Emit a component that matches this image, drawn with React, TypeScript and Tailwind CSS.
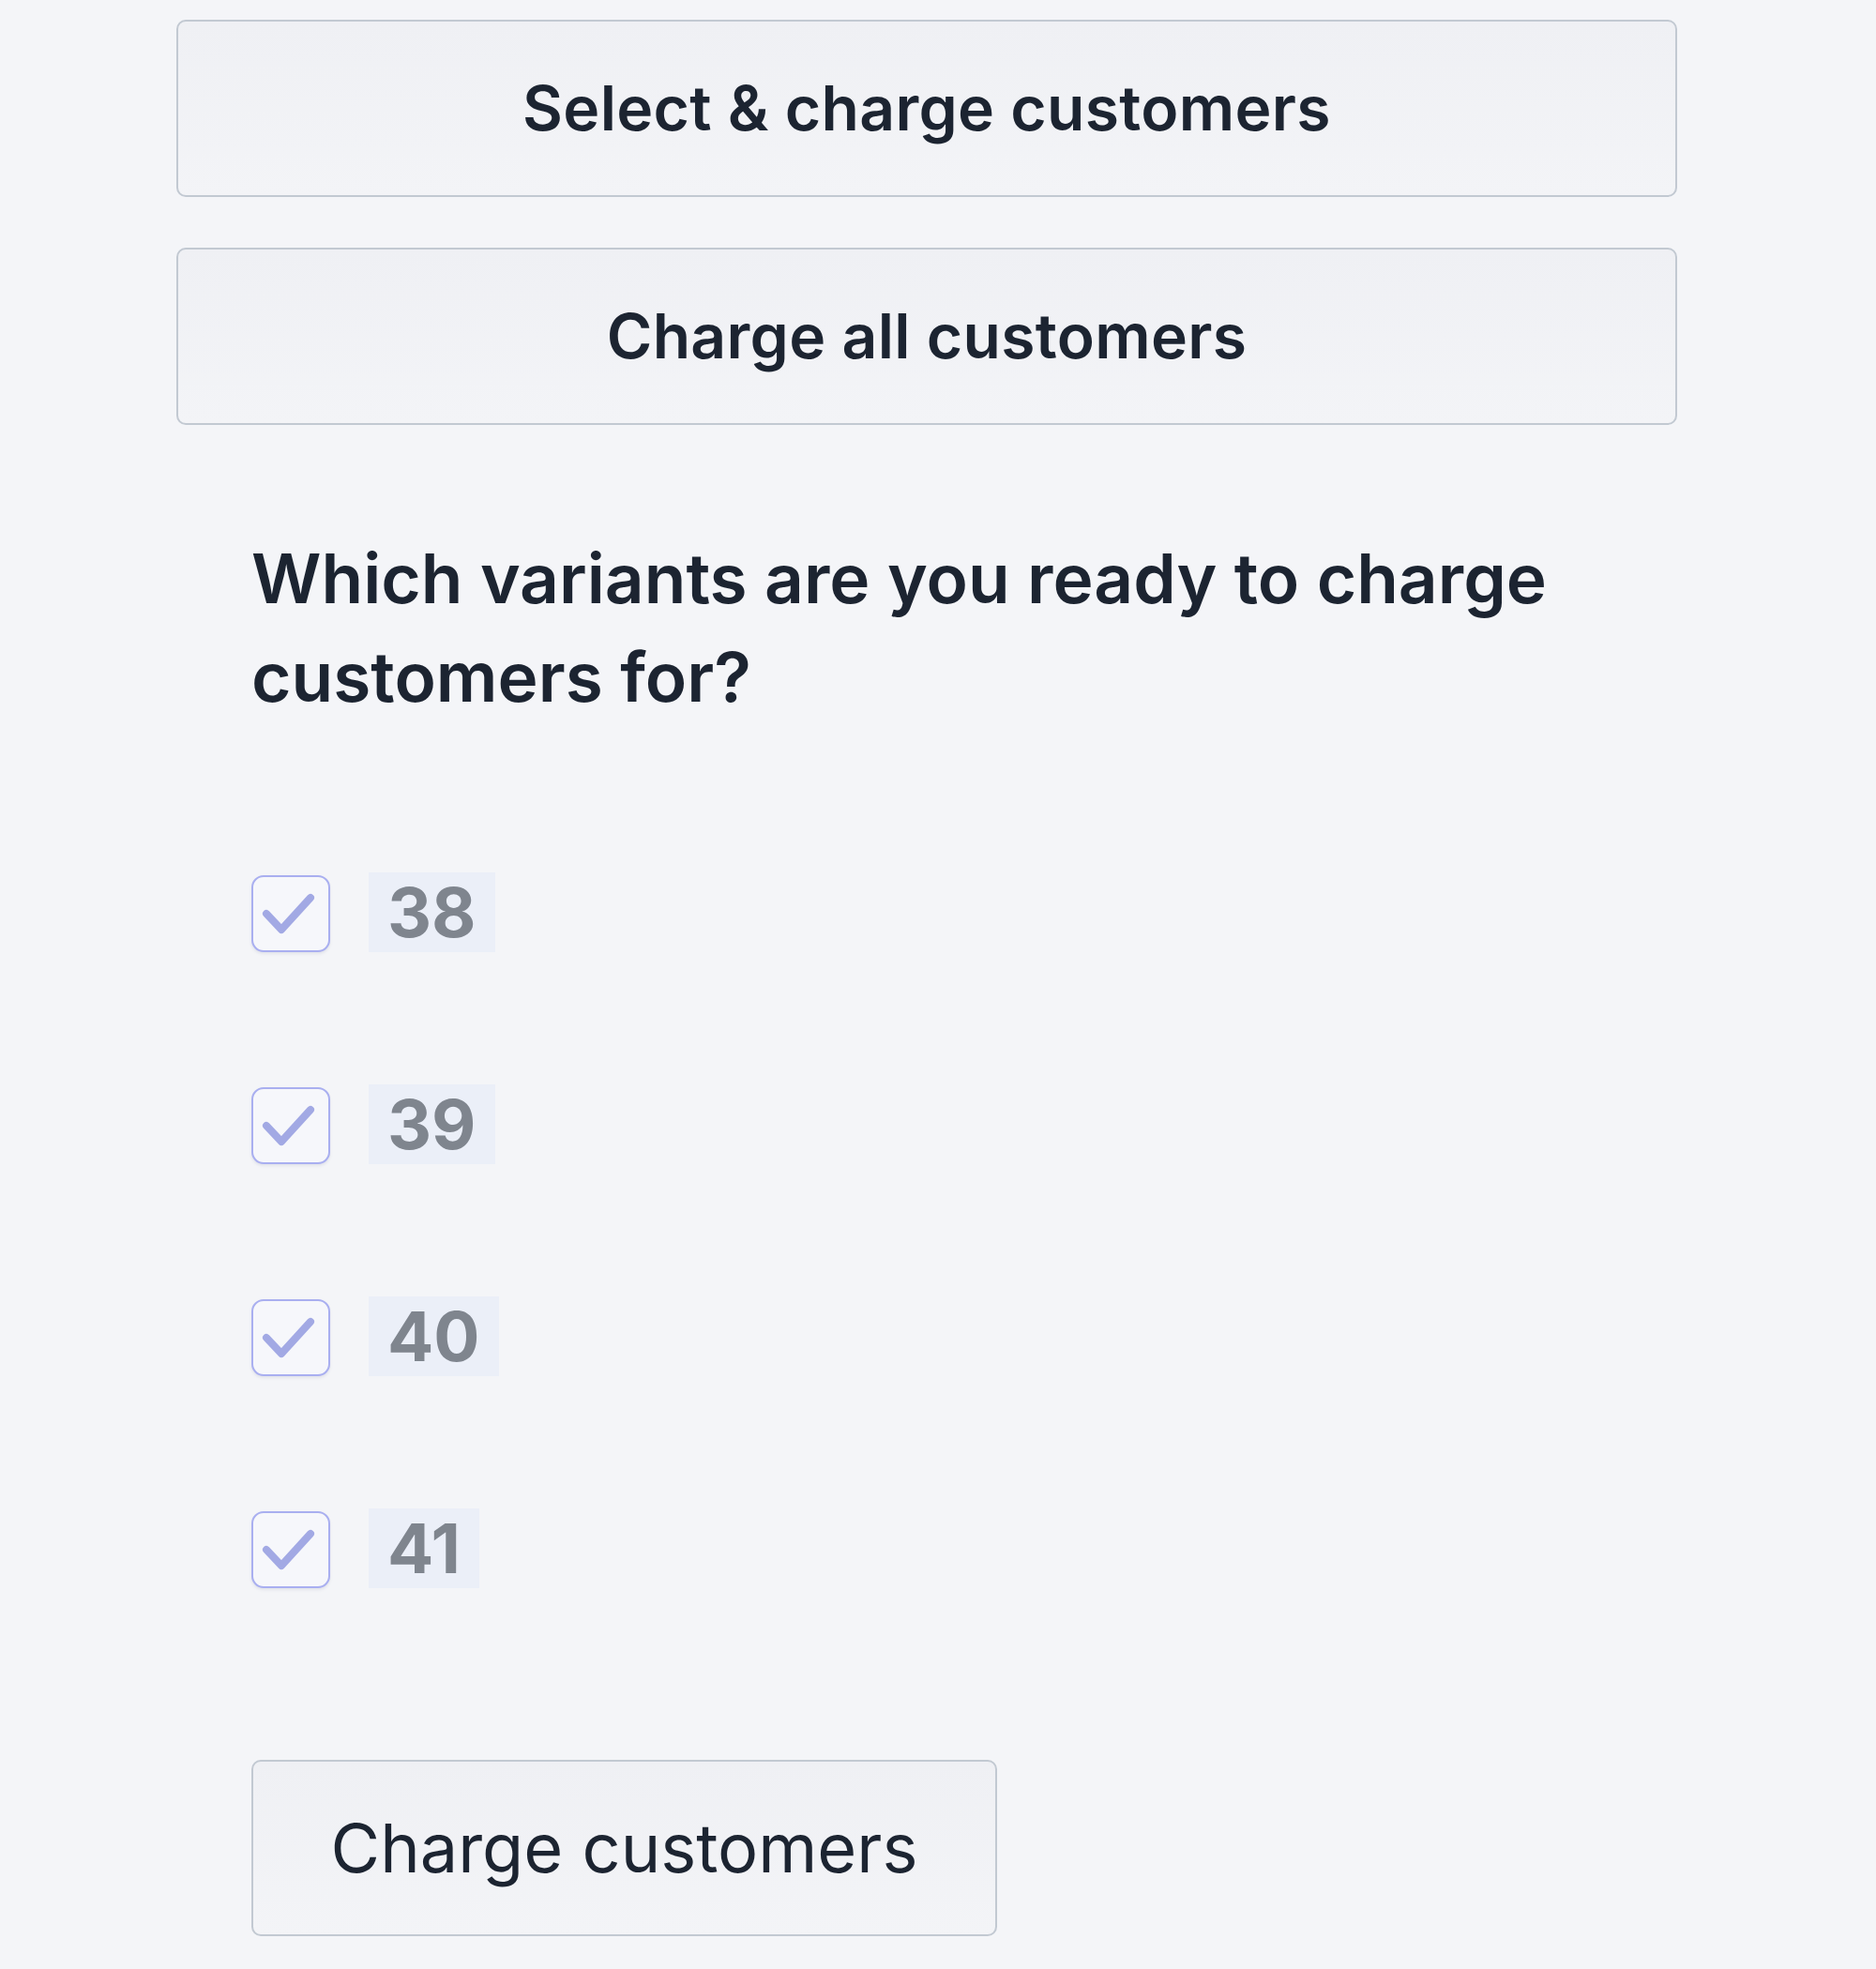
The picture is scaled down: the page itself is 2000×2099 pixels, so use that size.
const variants = ["38", "39", "40", "41"];

function WideButton({ label }: { label: string }) {
  return (
    <button className="w-full h-[189px] rounded-[10px] border-[2.5px] border-[#c2c9d2] bg-gradient-to-b from-[#eff0f4] to-[#f3f4f7] text-[#1c2431] text-[66px] font-semibold tracking-[0.3px]">
      {label}
    </button>
  );
}

export default function App() {
  return (
    <div className="min-h-[2099px] w-[2000px] bg-[#f4f5f8] font-['Inter',sans-serif]">
      <div className="w-[1600px] ml-[188px] pt-[21px] flex flex-col">
        <div className="flex flex-col gap-[54px]">
          <WideButton label="Select & charge customers" />
          <WideButton label="Charge all customers" />
        </div>

        <div className="pl-[80px] pt-[111px]">
          <h2 className="w-[1420px] text-[73px] leading-[105px] font-semibold text-[#1c2431]">
            Which variants are you ready to charge customers for?
          </h2>

          <div className="mt-[156px] flex flex-col gap-[141px]">
            {variants.map((v) => (
              <label key={v} className="flex items-center gap-[41px] h-[85px]">
                <span className="w-[84px] h-[82px] mt-[3px] rounded-[13px] border-2 border-[#a9aff0] bg-[#f6f7fb] flex shadow-[0_2px_3px_rgba(120,130,160,0.15)]">
                  <svg viewBox="0 0 80 78" className="w-[80px] h-[78px]">
                    <polyline
                      points="14,39 30,56 61,22"
                      fill="none"
                      stroke="#a2a9e4"
                      strokeWidth="8"
                      strokeLinecap="round"
                      strokeLinejoin="round"
                    />
                  </svg>
                </span>
                <span className="h-[85px] px-[20px] bg-[#ebeff8] flex items-center text-[73px] font-bold text-[#7f858e]">
                  {v}
                </span>
              </label>
            ))}
          </div>

          <button className="mt-[183px] w-[795px] h-[188px] rounded-[10px] border-[2.5px] border-[#c2c9d2] bg-gradient-to-b from-[#eff0f4] to-[#f3f4f7] text-[#1c2431] text-[72px] font-normal">
            Charge customers
          </button>
        </div>
      </div>
    </div>
  );
}
